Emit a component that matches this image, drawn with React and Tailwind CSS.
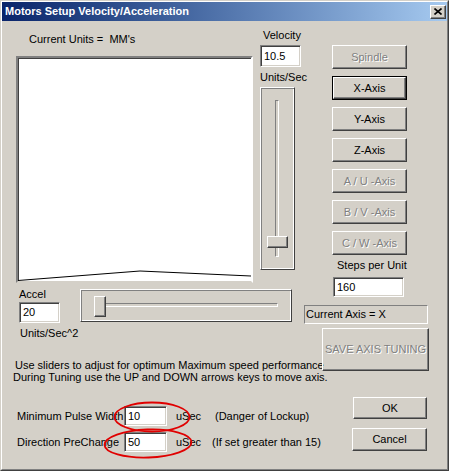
import React from "react";

const raised =
  "border border-t-white border-l-white border-r-[#404040] border-b-[#404040] shadow-[inset_-1px_-1px_0_#808080]";
const sunken =
  "border border-t-[#808080] border-l-[#808080] border-r-white border-b-white shadow-[inset_1px_1px_0_#404040,inset_-1px_-1px_0_#d4d0c8]";
const disabledText = "text-[#808080] [text-shadow:1px_1px_0_#ffffff]";

function Btn({ children, className = "", disabled, isDefault }) {
  if (isDefault) {
    return (
      <div className={`border border-black ${className}`}>
        <div className={`w-full h-full flex items-center justify-center ${raised}`}>{children}</div>
      </div>
    );
  }
  return (
    <div className={`flex items-center justify-center whitespace-nowrap ${raised} ${disabled ? disabledText : ""} ${className}`}>
      {children}
    </div>
  );
}

function Field({ value, className = "" }) {
  return <div className={`shrink-0 bg-white flex items-center pl-[3px] ${sunken} ${className}`}>{value}</div>;
}

function VSlider() {
  return (
    <div className="relative mt-[3px] w-[35px] h-[183px] border border-t-white border-l-white border-r-[#404040] border-b-[#404040] shadow-[inset_1px_1px_0_#808080,inset_-1px_-1px_0_#ffffff]">
      <div className={`ml-[14px] mt-[12px] w-[4px] h-[157px] ${sunken} shadow-none`} />
      <div className={`absolute left-[6px] top-[148px] w-[21px] h-[12px] bg-[#d4d0c8] ${raised}`} />
    </div>
  );
}

function HSlider() {
  return (
    <div className="relative shrink-0 ml-[20px] mt-[6px] w-[212px] h-[33px] border border-t-white border-l-white border-r-[#404040] border-b-[#404040] shadow-[inset_1px_1px_0_#808080,inset_-1px_-1px_0_#ffffff]">
      <div className={`ml-[16px] mt-[13px] w-[181px] h-[4px] ${sunken} shadow-none`} />
      <div className={`absolute left-[13px] top-[6px] w-[12px] h-[21px] bg-[#d4d0c8] ${raised}`} />
    </div>
  );
}

export default function App() {
  return (
    <div className="relative w-[449px] h-[471px] bg-[#d4d0c8] font-['Liberation_Sans',Arial,sans-serif] text-[11px] leading-[13px] text-black border border-t-[#d4d0c8] border-l-[#d4d0c8] border-r-[#404040] border-b-[#404040]">
      <div className="h-full flex flex-col border border-t-white border-l-white border-r-[#808080] border-b-[#808080]">
        {/* title bar */}
        <div className="h-[19px] shrink-0 flex items-center justify-between pl-[3px] pr-[1px] bg-gradient-to-r from-[#0a246a] to-[#a6caf0]">
          <span className="text-white font-bold text-[11px]">Motors Setup Velocity/Acceleration</span>
          <div className={`w-[16px] h-[14px] bg-[#d4d0c8] flex items-center justify-center ${raised}`}>
            <svg width="8" height="7" viewBox="0 0 8 7">
              <path d="M0.5 0.5 L7.5 6.5 M7.5 0.5 L0.5 6.5" stroke="black" strokeWidth="1.6" />
            </svg>
          </div>
        </div>

        <div className="flex flex-1">
          {/* left part */}
          <div className="w-[300px] shrink-0 flex flex-col">
            <div className="flex items-start">
              <div className="ml-[14px] mt-[12px] flex flex-col">
                <div className="ml-[13px] h-[13px] whitespace-pre">Current Units =  MM's</div>
                <div className="relative mt-[10px] w-[237px] h-[227px] bg-white border-2 border-t-[#808080] border-l-[#808080] border-r-white border-b-[#d4d0c8] shadow-[inset_1px_1px_0_#404040]">
                  <svg className="absolute inset-0" width="233" height="223" viewBox="0 0 233 223">
                    <polyline points="0,222.5 122,213 233,218" fill="none" stroke="black" strokeWidth="1" />
                  </svg>
                </div>
              </div>
              <div className="ml-[7px] mt-[8px] flex flex-col">
                <div className="ml-[3px] h-[13px]">Velocity</div>
                <Field value="10.5" className="mt-[3px] w-[41px] h-[22px]" />
                <div className="mt-[4px] h-[13px] whitespace-nowrap">Units/Sec</div>
                <VSlider />
              </div>
            </div>

            <div className="flex items-start">
              <div className="ml-[17px] mt-[5px] w-[41px] shrink-0 flex flex-col whitespace-nowrap">
                <div className="h-[13px]">Accel</div>
                <Field value="20" className="mt-[1px] w-[41px] h-[21px]" />
                <div className="ml-[1px] mt-[4px] h-[13px]">Units/Sec^2</div>
              </div>
              <HSlider />
            </div>

            <div className="mt-[19px] leading-[12px] whitespace-nowrap">
              <div className="ml-[13px]">Use sliders to adjust for optimum Maximum speed performance</div>
              <div className="ml-[11px]">During Tuning use the UP and DOWN arrows keys to move axis.</div>
            </div>

            <div className="mt-[23px] h-[20px] flex items-center whitespace-nowrap">
              <div className="ml-[15px] w-[107px] min-w-0 shrink-0">Minimum Pulse Width</div>
              <Field value="10" className="w-[43px] h-[20px]" />
              <div className="ml-[9px] w-[39px] shrink-0">uSec</div>
              <div>(Danger of Lockup)</div>
            </div>
            <div className="mt-[6px] h-[20px] flex items-center whitespace-nowrap">
              <div className="ml-[15px] w-[107px] min-w-0 shrink-0">Direction PreChange</div>
              <Field value="50" className="w-[43px] h-[20px]" />
              <div className="ml-[9px] w-[36px] shrink-0">uSec</div>
              <div>(If set greater than 15)</div>
            </div>
          </div>

          {/* right part */}
          <div className="flex flex-col">
            <div className="ml-[30px] mt-[24px] flex flex-col gap-[7px]">
              <Btn disabled className="w-[75px] h-[24px]">Spindle</Btn>
              <Btn isDefault className="w-[75px] h-[24px]">X-Axis</Btn>
              <Btn className="w-[75px] h-[24px]">Y-Axis</Btn>
              <Btn className="w-[75px] h-[24px]">Z-Axis</Btn>
              <Btn disabled className="w-[75px] h-[24px]">A / U -Axis</Btn>
              <Btn disabled className="w-[75px] h-[24px]">B / V -Axis</Btn>
              <Btn disabled className="w-[75px] h-[24px]">C / W -Axis</Btn>
            </div>
            <div className="ml-[35px] mt-[4px] h-[13px] whitespace-nowrap">Steps per Unit</div>
            <Field value="160" className="ml-[31px] mt-[5px] w-[71px] h-[20px]" />
            <div className="ml-[2px] mt-[8px] w-[124px] h-[19px] pl-[1px] flex items-center whitespace-nowrap border border-t-[#808080] border-l-[#808080] border-r-white border-b-white">
              Current Axis = X
            </div>
            <Btn disabled className="ml-[20px] mt-[4px] w-[107px] h-[43px]">SAVE AXIS TUNING</Btn>
            <Btn className="ml-[51px] mt-[26px] w-[74px] h-[22px]">OK</Btn>
            <Btn className="ml-[50px] mt-[9px] w-[75px] h-[23px]">Cancel</Btn>
          </div>
        </div>
      </div>

      {/* red annotation circles */}
      <svg className="absolute left-0 top-0 pointer-events-none" width="449" height="471" viewBox="0 0 449 471">
        <ellipse cx="151" cy="416" rx="37.5" ry="14.5" fill="none" stroke="#e00000" strokeWidth="1.8" />
        <ellipse cx="147" cy="442.5" rx="43.5" ry="14" fill="none" stroke="#e00000" strokeWidth="1.8" transform="rotate(-2 147 442.5)" />
      </svg>
    </div>
  );
}
